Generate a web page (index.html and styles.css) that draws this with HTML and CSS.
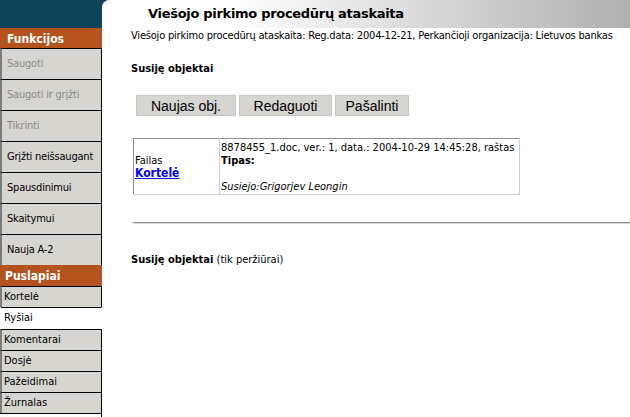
FILE: index.html
```html
<!DOCTYPE html>
<html>
<head>
    <title>Viešojo pirkimo procedūrų ataskaita</title>
    <link rel="stylesheet" href="styles.css">
</head>
<body>
    <div class="layout">
        <div class="sidebar">
            <div class="sidebar-top"></div>
            <div class="side-title">Funkcijos</div>
            <div class="func-btn disabled">Saugoti</div>
            <div class="func-btn disabled">Saugoti ir grįžti</div>
            <div class="func-btn disabled">Tikrinti</div>
            <div class="func-btn">Grįžti neišsaugant</div>
            <div class="func-btn">Spausdinimui</div>
            <div class="func-btn">Skaitymui</div>
            <div class="func-btn">Nauja A-2</div>
            <div class="side-title pages">Puslapiai</div>
            <div class="page-link">Kortelė</div>
            <div class="page-link active">Ryšiai</div>
            <div class="page-link">Komentarai</div>
            <div class="page-link">Dosjė</div>
            <div class="page-link">Pažeidimai</div>
            <div class="page-link">Žurnalas</div>
            <div class="side-rest"></div>
        </div>

        <div class="content-wrap">
            <div class="content">
                <div class="header-bar">
                    <h1>Viešojo pirkimo procedūrų ataskaita</h1>
                </div>
                <div class="body">
                    <p class="subtitle">Viešojo pirkimo procedūrų ataskaita: Reg.data: 2004-12-21, Perkančioji organizacija: Lietuvos bankas</p>

                    <p class="section-title"><b>Susiję objektai</b></p>

                    <div class="actions">
                        <button class="btn-new">Naujas obj.</button>
                        <button class="btn-edit">Redaguoti</button>
                        <button class="btn-del">Pašalinti</button>
                    </div>

                    <table class="objects">
                        <tr>
                            <td class="type-cell">Failas<br><a href="#">Kortelė</a></td>
                            <td class="info-cell">
                                8878455_1.doc, ver.: 1, data.: 2004-10-29 14:45:28, raštas<br>
                                <b>Tipas:</b><br>
                                <br>
                                <i>Susiejo:Grigorjev Leongin</i>
                            </td>
                        </tr>
                    </table>

                    <hr>

                    <p class="section-title readonly"><b>Susiję objektai</b> (tik peržiūrai)</p>
                </div>
            </div>
        </div>
    </div>
</body>
</html>
```

FILE: styles.css
```css
body {
    margin: 0;
    padding: 0;
    font-family: Tahoma, "DejaVu Sans Condensed", "Liberation Sans", sans-serif;
    font-size: 11px;
    color: #000;
    background: #fff;
}

.layout {
    display: flex;
    height: 417px;
    overflow: hidden;
}

/* left menu */
.sidebar {
    width: 102px;
    flex-shrink: 0;
    display: flex;
    flex-direction: column;
}

.sidebar-top {
    height: 28px;
    background: #0b4456;
}

.side-title {
    height: 20px;
    line-height: 22px;
    background: #b5531e;
    color: #fff;
    font-weight: bold;
    font-size: 12px;
    padding-left: 7px;
}

.side-title.pages {
    height: 21px;
    line-height: 22px;
    padding-left: 5px;
}

.func-btn {
    height: 30px;
    line-height: 30px;
    background: #d7d5d0;
    border-top: 1px solid #000;
    border-right: 1px solid #000;
    border-left: 2px solid #7c7c7c;
    padding-left: 5px;
    color: #000;
    letter-spacing: -0.2px;
}

.func-btn.disabled {
    color: #8a8a8a;
}

.page-link {
    height: 20px;
    line-height: 20px;
    background: #d7d5d0;
    border-top: 1px solid #000;
    border-right: 1px solid #000;
    border-left: 2px solid #7c7c7c;
    padding-left: 2px;
}

.page-link.active {
    background: #fff;
    border-right-color: #fff;
    border-left-color: #fff;
    height: 21px;
}

.side-rest {
    flex: 1;
    border-top: 1px solid #000;
    border-right: 1px solid #000;
}

/* main area */
.content-wrap {
    flex: 1;
    background: linear-gradient(#0b4456 28px, #fff 28px);
}

.content {
    background: #fff;
    border-top-left-radius: 8px;
    height: 100%;
}

.header-bar {
    height: 28px;
    background: linear-gradient(to right, #fff 0%, #fff 25%, #b0b0b0 100%);
    border-top-left-radius: 8px;
}

h1 {
    margin: 0;
    padding-left: 46px;
    font-family: "DejaVu Sans", sans-serif;
    font-size: 13px;
    letter-spacing: -0.3px;
    line-height: 28px;
}

.body {
    padding-left: 29px;
}

.subtitle {
    margin: 0;
    padding-top: 1px;
    line-height: 13px;
    white-space: nowrap;
    letter-spacing: -0.2px;
}

.section-title {
    margin: 0;
    padding-top: 20px;
    line-height: 13px;
}

.actions {
    display: flex;
    gap: 3px;
    margin-top: 20px;
    margin-left: 5px;
}

.actions button {
    height: 21px;
    padding: 0;
    font-family: "Liberation Sans", Arial, sans-serif;
    font-size: 14px;
    background: #d5d5d1;
    border: 1px solid #c4c4c0;
    color: #000;
}

.btn-new {
    width: 100px;
}

.btn-edit {
    width: 93px;
}

.btn-del {
    width: 74px;
}

.objects {
    margin-top: 22px;
    margin-left: 2px;
    width: 387px;
    border-collapse: collapse;
    border-top: 1px solid #8c8c8c;
    border-left: 1px solid #8c8c8c;
    border-right: 1px solid #d0d0d0;
    border-bottom: 1px solid #d0d0d0;
}

.objects td {
    padding: 2px 1px 1px 1px;
    line-height: 13px;
}

.type-cell {
    width: 83px;
    vertical-align: middle;
    border-right: 1px solid #d0d0d0;
}

.type-cell a {
    color: #0000ee;
    font-weight: bold;
    font-size: 12px;
}

.info-cell {
    border-left: 1px solid #8c8c8c;
    vertical-align: top;
}

hr {
    margin: 27px 0 0 2px;
    border: none;
    border-top: 1px solid #8c8c8c;
    border-bottom: 1px solid #d8d8d8;
}

.readonly {
    padding-top: 29px;
}
```
